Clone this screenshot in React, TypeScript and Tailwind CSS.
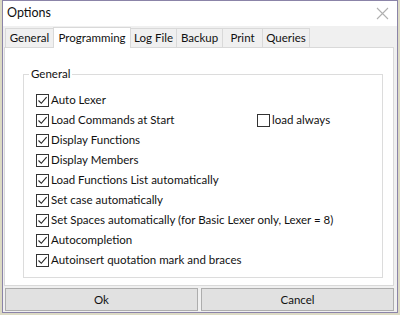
import React from "react";

const Check = ({ checked }: { checked: boolean }) => (
  <div className="w-[13px] h-[13px] border border-[#333] bg-white flex items-center justify-center shrink-0">
    {checked && (
      <svg width="11" height="11" viewBox="0 0 11 11">
        <path d="M1.5 5.5 L4.3 8.3 L9.6 2.2" fill="none" stroke="#222" strokeWidth="1.1" />
      </svg>
    )}
  </div>
);

const rows = [
  "Auto Lexer",
  "Load Commands at Start",
  "Display Functions",
  "Display Members",
  "Load Functions List automatically",
  "Set case automatically",
  "Set Spaces automatically (for Basic Lexer only, Lexer = 8)",
  "Autocompletion",
  "Autoinsert quotation mark and braces",
];

const tabs: { t: string; w: string }[] = [
  { t: "General", w: "w-[49px]" },
  { t: "Programming", w: "w-[78px]" },
  { t: "Log File", w: "w-[47px]" },
  { t: "Backup", w: "w-[47px]" },
  { t: "Print", w: "w-[41px]" },
  { t: "Queries", w: "w-[48px]" },
];

export default function App() {
  return (
    <div
      className="w-[400px] h-[315px] bg-[#dcdac4] flex pl-[2px] pr-[2px] text-[11.5px] text-[#111]"
      style={{ fontFamily: 'Lato, "Noto Sans", sans-serif' }}
    >
      <div className="flex-1 h-[313px] border border-[#8b84a8] bg-[#f0f0f0] flex flex-col">
        <div className="h-[25px] bg-white flex items-center justify-between pl-[4px] pr-[8px] shrink-0">
          <span className="text-[12.5px]">Options</span>
          <svg width="13" height="13" viewBox="0 0 13 13">
            <path d="M1 1 L12 12 M12 1 L1 12" stroke="#b0b0b0" strokeWidth="1.1" />
          </svg>
        </div>
        <div className="flex-1 flex flex-col px-[1px]">
          <div className="flex items-end h-[21px] pl-[1px] shrink-0">
            {tabs.map(({ t, w }) =>
              t === "Programming" ? (
                <div
                  key={t}
                  className={`${w} h-[21px] bg-white border border-b-0 border-[#d9d9d9] flex items-center justify-center -mb-[1px] -ml-[1px] relative z-10`}
                >
                  {t}
                </div>
              ) : (
                <div
                  key={t}
                  className={`${w} h-[19px] bg-[#f0f0f0] border border-b-0 border-[#d9d9d9] -ml-[1px] first:ml-0 flex items-center justify-center`}
                >
                  {t}
                </div>
              )
            )}
          </div>
          <div className="h-[239px] bg-white border border-[#d9d9d9] mr-[2px] pt-[26px] pl-[18px] pr-[10px]">
            <div className="relative border border-[#dcdcdc] h-[204px] pt-[15px] pl-[12px]">
              <span className="absolute -top-[9px] left-[5px] bg-white px-[2px] leading-[16px]">General</span>
              <div className="flex flex-col">
                {rows.map((r, i) => (
                  <div key={r} className="h-[20px] flex items-center">
                    <Check checked />
                    <span className={`leading-[16px] ml-[2px] ${i === 1 ? "w-[206px] shrink-0" : ""}`}>{r}</span>
                    {i === 1 && (
                      <div className="flex items-center">
                        <Check checked={false} />
                        <span className="ml-[2px]">load always</span>
                      </div>
                    )}
                  </div>
                ))}
              </div>
            </div>
          </div>
          <div className="flex gap-[3px] pt-[2px] pl-[1px] pr-[2px]">
            <div className="flex-1 h-[23px] bg-[#e1e1e1] border border-[#adadad] flex items-center justify-center">Ok</div>
            <div className="flex-1 h-[23px] bg-[#e1e1e1] border border-[#adadad] flex items-center justify-center">Cancel</div>
          </div>
        </div>
      </div>
    </div>
  );
}
